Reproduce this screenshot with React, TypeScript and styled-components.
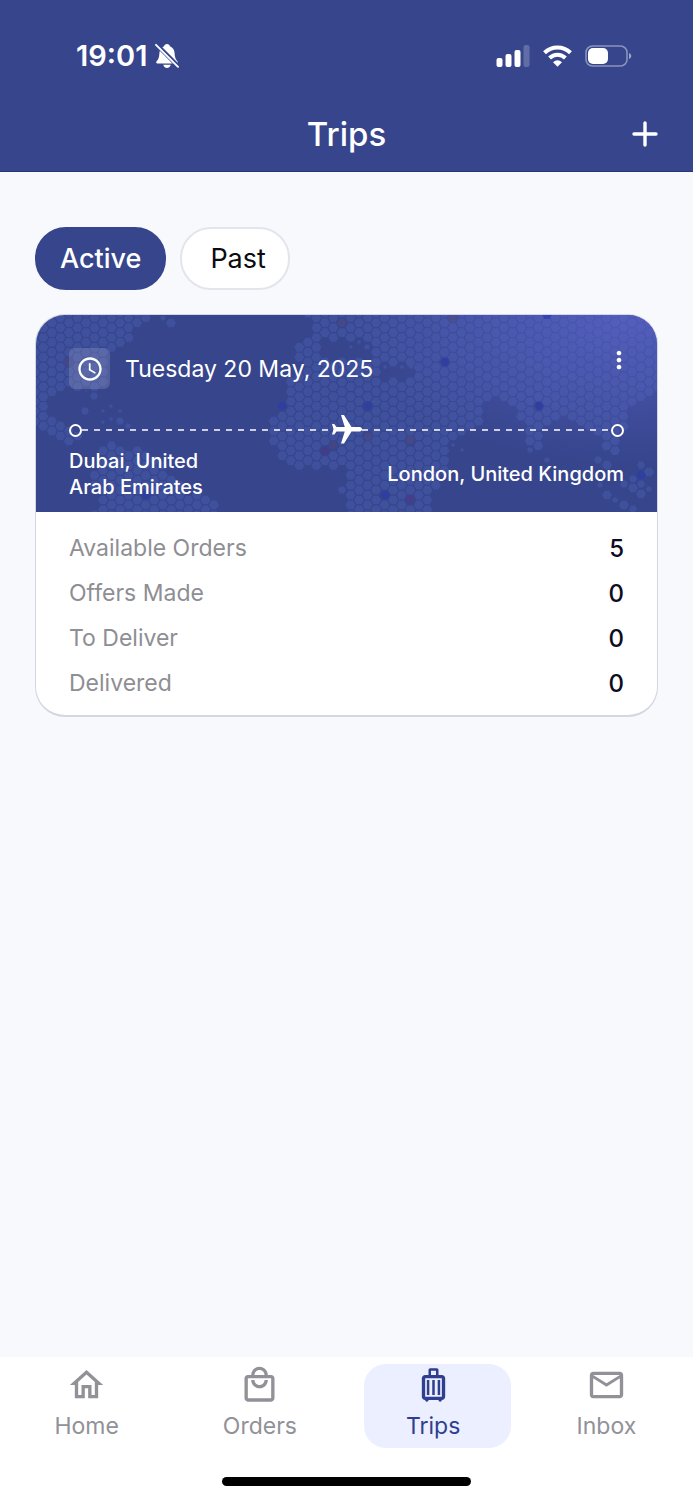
import React from "react";
import styled, { createGlobalStyle } from "styled-components";
import {
  MdAccessTime,
  MdFlight,
  MdMoreVert,
  MdOutlineEmail,
  MdOutlineHome,
  MdOutlineLocalMall,
  MdOutlineLuggage,
} from "react-icons/md";

const navy = "#36458c";

const GlobalStyle = createGlobalStyle`
  * { box-sizing: border-box; }
  body {
    margin: 0;
    background: #f8f9fc;
    font-family: Inter, "Liberation Sans", sans-serif;
    color: #0d0c22;
  }
  button { font: inherit; border: 0; padding: 0; cursor: pointer; }
`;

const Screen = styled.div`
  min-height: 100vh;
  display: flex;
  flex-direction: column;
`;

const TopBar = styled.header`
  background: ${navy};
  color: #fff;
  border-bottom: 1px solid #2b3878;
`;

const StatusBar = styled.div`
  display: flex;
  align-items: center;
  justify-content: space-between;
  padding: 38px 61px 0 76px;
  height: 74px;
`;

const Clock = styled.div`
  display: flex;
  align-items: center;
  gap: 8px;
  font-size: 29px;
  font-weight: 600;
  line-height: 36px;
`;

const StatusIcons = styled.div`
  display: flex;
  align-items: center;
  gap: 13px;
`;

const TitleRow = styled.div`
  display: grid;
  grid-template-columns: 1fr auto 1fr;
  align-items: center;
  padding: 40px 35px 17px;
`;

const Title = styled.h1`
  grid-column: 2;
  margin: 0;
  font-size: 33px;
  font-weight: 500;
  line-height: 40px;
`;

const AddButton = styled.button`
  justify-self: end;
  display: flex;
  background: none;
  color: inherit;
`;

const Content = styled.main`
  flex: 1;
  padding: 55px 35px 40px;
`;

const Filters = styled.div`
  display: flex;
  gap: 14px;
  margin-bottom: 24px;
`;

const Pill = styled.button<{ $active?: boolean }>`
  height: 63px;
  border-radius: 31px;
  font-size: 27px;
  line-height: 32px;
  font-weight: ${(p) => (p.$active ? 500 : 400)};
  color: ${(p) => (p.$active ? "#fff" : "#0b0b0f")};
  background: ${(p) => (p.$active ? navy : "#fff")};
  border: 2px solid ${(p) => (p.$active ? navy : "#e4e4ed")};
  padding: ${(p) => (p.$active ? "0 23px" : "0 22px 0 28px")};
`;

const Card = styled.article`
  border: 1px solid #d5d5e3;
  border-bottom-width: 2px;
  border-radius: 30px;
  overflow: hidden;
  background: #fff;
`;

const CardHead = styled.div`
  position: relative;
  height: 197px;
  padding: 31px 33px 0;
  color: #fff;
  background: radial-gradient(ellipse 280px 150px at 95% 0%, #5058b6 0%, rgba(80, 88, 182, 0) 100%), ${navy};
`;

const MapArt = styled.svg`
  position: absolute;
  inset: 0;
  width: 100%;
  height: 100%;
`;

const DateRow = styled.div`
  position: relative;
  display: flex;
  align-items: center;
`;

const IconTile = styled.span`
  display: grid;
  place-items: center;
  width: 41px;
  height: 41px;
  margin-right: 15px;
  border-radius: 6px;
  background: rgba(255, 255, 255, 0.14);
`;

const TripDate = styled.h2`
  flex: 1;
  margin: 0;
  font-size: 23px;
  font-weight: 400;
  line-height: 32px;
`;

const MenuButton = styled.button`
  display: flex;
  width: 28px;
  margin: 0 -9px 17px 0;
  justify-content: center;
  background: none;
  color: inherit;
`;

const Route = styled.div`
  position: relative;
  display: flex;
  align-items: center;
  height: 32px;
  margin-top: 23px;
`;

const Stop = styled.span`
  width: 13px;
  height: 13px;
  border: 2px solid #fff;
  border-radius: 50%;
`;

const Dashes = styled.span`
  flex: 1;
  height: 2px;
  background: repeating-linear-gradient(90deg, rgba(255, 255, 255, 0.75) 0 6px, transparent 6px 12px);
`;

const Plane = styled(MdFlight)`
  transform: rotate(90deg);
  margin: 0 -3px;
`;

const Cities = styled.div`
  position: relative;
  display: flex;
  align-items: center;
  justify-content: space-between;
  margin-top: 2px;
  font-size: 20px;
  font-weight: 500;
  line-height: 26px;
`;

const City = styled.span<{ $narrow?: boolean }>`
  max-width: ${(p) => (p.$narrow ? "150px" : "none")};
`;

const Stats = styled.dl`
  margin: 0;
  padding: 14px 33px 9px;
`;

const Stat = styled.div`
  display: flex;
  justify-content: space-between;
  font-size: 23px;
  line-height: 45px;
`;

const StatLabel = styled.dt`
  color: #8e8e93;
`;

const StatValue = styled.dd`
  margin: 0;
  font-size: 24px;
  font-weight: 500;
`;

const BottomBar = styled.footer`
  background: #fff;
  padding: 7px 0 14px;
`;

const Tabs = styled.nav`
  display: grid;
  grid-template-columns: repeat(4, 1fr);
  padding-bottom: 29px;
`;

const Tab = styled.a<{ $active?: boolean }>`
  display: flex;
  flex-direction: column;
  align-items: center;
  height: 84px;
  margin: 0 9px 0 17px;
  padding: 1px 8px 0 0;
  border-radius: 22px;
  font-size: 23px;
  line-height: 43px;
  text-decoration: none;
  color: ${(p) => (p.$active ? "#2f3f8f" : "#919197")};
  background: ${(p) => (p.$active ? "#ebefff" : "none")};
`;

const HomeIndicator = styled.div`
  width: 36%;
  height: 9px;
  margin: 0 auto;
  border-radius: 5px;
  background: #000;
`;

type Point = [number, number];

const LAND: Point[][] = [
  [[-5, -5], [112, -5], [112, 8], [100, 18], [86, 30], [76, 35], [74, 66], [54, 75], [30, 76], [14, 78], [10, 86], [10, 106], [28, 106], [38, 116], [46, 127], [30, 130], [14, 118], [-5, 112]],
  [[74, 126], [98, 133], [128, 150], [150, 175], [170, 183], [184, 190], [184, 205], [54, 205], [62, 185], [56, 168], [60, 152], [66, 133]],
  [[270, -5], [278, 10], [276, 22], [262, 28], [260, 40], [268, 48], [254, 64], [250, 78], [240, 94], [236, 108], [236, 128], [244, 146], [260, 154], [290, 153], [306, 152], [310, 168], [306, 178], [312, 205], [394, 205], [396, 178], [408, 164], [416, 146], [414, 124], [430, 114], [447, 104], [447, 90], [460, 86], [478, 94], [490, 122], [500, 136], [508, 124], [508, 110], [530, 100], [550, 114], [560, 124], [578, 138], [588, 116], [594, 96], [614, 86], [626, 72], [626, -5]],
];

const SEAS: Point[][] = [
  [[288, 22], [330, 26], [340, 42], [320, 48], [288, 42]],
  [[348, 50], [378, 50], [378, 63], [348, 65]],
];

// Loose cells: x, y, radius
const ISLES: [number, number, number][] = [
  [127, 3, 3], [135, 8, 5], [58, 81, 4], [49, 96, 4], [67, 96, 2], [75, 91, 2], [84, 96, 2], [84, 106, 4], [75, 104, 2], [67, 107, 2], [92, 111, 3],
  [92, 22, 2], [50, 76, 1], [306, 175, 4], [562, 145, 4], [571, 150, 5], [564, 170, 3], [571, 180, 5], [579, 185, 3], [588, 190, 5], [597, 194, 4],
  [597, 173, 5], [605, 179, 5], [605, 150, 4], [613, 157, 5], [597, 164, 4], [613, 174, 3], [588, 169, 4], [605, 169, 4],
  [494, 135, 3], [511, 145, 3], [426, 120, 1], [426, 135, 2], [417, 130, 2],
  [315, 32, 2], [323, 27, 2], [331, 32, 3], [349, 52, 2], [366, 52, 2], [375, 52, 2],
];

const MARKS: [number, number, string][] = [
  [332, 91, "#3040a0"], [409, 47, "#3040a0"], [503, 91, "#3040a0"], [511, 0, "#3444b0"], [349, 180, "#2f3fa0"], [605, 160, "#2f3fa0"], [246, 91, "#2f3fa0"], [110, 180, "#2f3fa0"],
  [374, 184, "#463e8c"], [332, 122, "#464888"], [374, 125, "#464888"], [289, 136, "#433c88"], [297, 130, "#434684"], [306, 8, "#464888"], [417, 3, "#4b4f92"], [31, 47, "#414788"],
];

const inside = (x: number, y: number, shape: Point[]) => {
  let hit = false;
  for (let i = 0, j = shape.length - 1; i < shape.length; j = i++) {
    const [xi, yi] = shape[i];
    const [xj, yj] = shape[j];
    if (yi > y !== yj > y && x < ((xj - xi) * (y - yi)) / (yj - yi) + xi) hit = !hit;
  }
  return hit;
};

const hex = (x: number, y: number, r: number) => {
  const h = r * 0.866;
  return `M${x - r} ${y}L${x - r / 2} ${y - h}H${x + r / 2}L${x + r} ${y}L${x + r / 2} ${y + h}H${x - r / 2}Z`;
};

const onLand = (x: number, y: number) => LAND.some((s) => inside(x, y, s)) && !SEAS.some((s) => inside(x, y, s));

const cells: string[] = [];
for (let i = -16; i < 58; i++) {
  for (let j = -1; j < 21; j++) {
    const x = 135.3 + 8.533 * i;
    const y = 7.7 + 9.85 * j + (i % 2 ? 4.93 : 0);
    const marked = MARKS.some(([mx, my]) => Math.hypot(mx - x, my - y) < 4);
    if (onLand(x, y) && !marked) cells.push(hex(x, y, 5));
  }
}
const LAND_PATH = cells.join("") + ISLES.map(([x, y, r]) => hex(x, y, r)).join("");

function WorldMap() {
  return (
    <MapArt viewBox="0 0 621 197" preserveAspectRatio="xMaxYMin slice" aria-hidden="true">
      <path d={LAND_PATH} fill="#5a72d0" fillOpacity="0.25" />
      {MARKS.map(([x, y, fill]) => (
        <path key={`${x}-${y}`} d={hex(x, y, 4.6)} fill={fill} />
      ))}
    </MapArt>
  );
}

function BellOff() {
  return (
    <svg width="24" height="26" viewBox="0 0 24 26" aria-hidden="true">
      <path fill="#fff" d="M12 1c1.700 0 2.600 1 2.900 2.200 3.100 1.200 4.600 3.700 4.700 7 .1 4.400 1.300 6.300 2.800 8 .9 1.100.4 2.300-.9 2.300H2.500c-1.300 0-1.800-1.200-.9-2.300 1.500-1.700 2.700-3.600 2.800-8 .1-3.300 1.600-5.800 4.700-7C9.400 2 10.300 1 12 1zM8.300 21.800h7.400c-.3 2-1.800 3.200-3.700 3.200s-3.400-1.200-3.700-3.200z" />
      <path d="M1.500 1.500L23.500 23.500" stroke={navy} strokeWidth="4.400" />
      <path d="M1 1.800L23 23.800" stroke="#fff" strokeWidth="1.900" strokeLinecap="round" />
    </svg>
  );
}

function Signal() {
  return (
    <svg width="34" height="22" viewBox="0 0 34 22" fill="#fff" aria-hidden="true">
      <rect x="0.500" y="13" width="6" height="9" rx="2" />
      <rect x="9.500" y="9" width="6" height="13" rx="2" />
      <rect x="18.500" y="5" width="6" height="17" rx="2" />
      <rect x="27.500" y="0" width="6" height="22" rx="2" opacity="0.22" />
    </svg>
  );
}

function Wifi() {
  return (
    <svg width="29" height="22" viewBox="0 0 29 22" aria-hidden="true">
      <g fill="none" stroke="#fff" strokeWidth="4">
        <path d="M1.500 7.700A18.600 18.600 0 0 1 27.500 7.700" />
        <path d="M6.600 13A11.300 11.300 0 0 1 22.400 13" />
      </g>
      <path fill="#fff" d="M14.500 21.800L10 17.200Q14.500 13.400 19 17.200Z" />
    </svg>
  );
}

function Battery() {
  return (
    <svg width="47" height="22" viewBox="0 0 47 22" aria-hidden="true">
      <rect x="1" y="1" width="41" height="20" rx="6.500" fill="none" stroke="#fff" strokeOpacity="0.42" strokeWidth="1.600" />
      <rect x="3" y="3" width="20" height="16" rx="5" fill="#fff" />
      <path d="M44 8c3 1 3 5 0 6z" fill="#fff" opacity="0.5" />
    </svg>
  );
}

const STATS: [string, number][] = [
  ["Available Orders", 5],
  ["Offers Made", 0],
  ["To Deliver", 0],
  ["Delivered", 0],
];

const TABS = [
  { label: "Home", Icon: MdOutlineHome },
  { label: "Orders", Icon: MdOutlineLocalMall },
  { label: "Trips", Icon: MdOutlineLuggage, active: true },
  { label: "Inbox", Icon: MdOutlineEmail },
];

export default function App() {
  return (
    <Screen>
      <GlobalStyle />
      <TopBar>
        <StatusBar>
          <Clock>
            19:01
            <BellOff />
          </Clock>
          <StatusIcons>
            <Signal />
            <Wifi />
            <Battery />
          </StatusIcons>
        </StatusBar>
        <TitleRow>
          <Title>Trips</Title>
          <AddButton aria-label="Add trip">
            <svg width="26" height="26" viewBox="0 0 26 26" aria-hidden="true">
              <path d="M13 2V24M2 13H24" stroke="#fff" strokeWidth="3.400" strokeLinecap="round" />
            </svg>
          </AddButton>
        </TitleRow>
      </TopBar>
      <Content>
        <Filters>
          <Pill $active aria-pressed="true">Active</Pill>
          <Pill aria-pressed="false">Past</Pill>
        </Filters>
        <Card>
          <CardHead>
            <WorldMap />
            <DateRow>
              <IconTile>
                <MdAccessTime size={28} />
              </IconTile>
              <TripDate>Tuesday 20 May, 2025</TripDate>
              <MenuButton aria-label="Trip options">
                <MdMoreVert size={28} />
              </MenuButton>
            </DateRow>
            <Route>
              <Stop />
              <Dashes />
              <Plane size={36} />
              <Dashes />
              <Stop />
            </Route>
            <Cities>
              <City $narrow>Dubai, United Arab Emirates</City>
              <City>London, United Kingdom</City>
            </Cities>
          </CardHead>
          <Stats>
            {STATS.map(([label, value]) => (
              <Stat key={label}>
                <StatLabel>{label}</StatLabel>
                <StatValue>{value}</StatValue>
              </Stat>
            ))}
          </Stats>
        </Card>
      </Content>
      <BottomBar>
        <Tabs>
          {TABS.map(({ label, Icon, active }) => (
            <Tab key={label} href="#" $active={active} aria-current={active ? "page" : undefined}>
              <Icon size={41} />
              {label}
            </Tab>
          ))}
        </Tabs>
        <HomeIndicator />
      </BottomBar>
    </Screen>
  );
}
